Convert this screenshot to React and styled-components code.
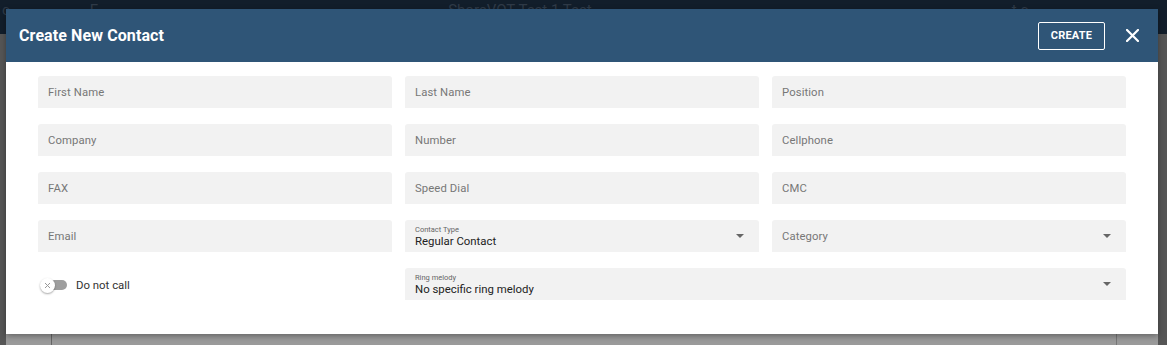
import React from "react";
import styled, { createGlobalStyle } from "styled-components";

const Global = createGlobalStyle`
  html, body { margin: 0; padding: 0; }
  body { font-family: Roboto, "Noto Sans", Arial, sans-serif; background: #575757; }
  * { box-sizing: border-box; }
`;

const Page = styled.div`
  position: relative;
  width: 1167px;
  height: 345px;
  overflow: hidden;
  background: #565656;
`;

const BackTop = styled.div`
  height: 34px;
  background: #121e2b;
  display: flex;
  align-items: flex-start;
  color: #2f3a47;
  font-size: 15px;
  line-height: 18px;
  white-space: nowrap;
  padding-top: 1px;
`;

const Ghost = styled.span`
  margin-left: ${(p) => p.$ml}px;
`;

const BackBottom = styled.div`
  position: absolute;
  left: 6px;
  right: 9px;
  bottom: 0;
  height: 11px;
  background: #9a9a9a;
  &::after {
    content: "";
    position: absolute;
    left: 45px;
    top: 0;
    bottom: 0;
    width: 1px;
    background: #666;
  }
  &::before {
    content: "";
    position: absolute;
    right: 41px;
    top: 0;
    bottom: 0;
    width: 1px;
    background: #777;
  }
`;

const Modal = styled.div`
  position: absolute;
  left: 6px;
  top: 9px;
  width: 1152px;
  height: 325px;
  background: #fff;
  box-shadow: 0 2px 6px rgba(0, 0, 0, 0.35);
  display: flex;
  flex-direction: column;
`;

const Header = styled.div`
  height: 53px;
  background: #2f5577;
  display: flex;
  align-items: center;
  padding: 0 18px 0 13px;
  flex-shrink: 0;
`;

const Title = styled.h1`
  margin: 0;
  font-size: 16px;
  font-weight: 700;
  color: #fff;
  flex: 1;
  letter-spacing: 0.1px;
`;

const CreateButton = styled.button`
  width: 67px;
  height: 28px;
  border: 1px solid #fff;
  border-radius: 2px;
  background: transparent;
  color: #fff;
  font-family: Roboto, sans-serif;
  font-weight: 700;
  font-size: 11px;
  letter-spacing: 0.2px;
  margin-right: 19px;
  padding: 0;
  cursor: pointer;
`;

const CloseButton = styled.button`
  width: 16px;
  height: 16px;
  border: 0;
  padding: 0;
  background: transparent;
  display: flex;
  align-items: center;
  justify-content: center;
  cursor: pointer;
`;

const Body = styled.div`
  padding: 14px 32px 0 32px;
  display: grid;
  grid-template-columns: repeat(3, 354px);
  column-gap: 13px;
  row-gap: 16px;
  grid-auto-rows: 32px;
`;

const Field = styled.div`
  background: #f2f2f2;
  border-radius: 3px 3px 0 0;
  display: flex;
  align-items: center;
  padding: 0 10px;
  position: relative;
  grid-column: ${(p) => (p.$span ? `span ${p.$span}` : "auto")};
`;

const Placeholder = styled.span`
  font-size: 11.3px;
  color: #777;
  letter-spacing: 0.1px;
`;

const SelectBody = styled.div`
  display: flex;
  flex-direction: column;
  flex: 1;
  padding-top: 1px;
`;

const SmallLabel = styled.span`
  font-size: 7.5px;
  color: #666;
  line-height: 9px;
`;

const Value = styled.span`
  font-size: 11.4px;
  color: #222;
  line-height: 14px;
`;

const Arrow = styled.span`
  position: absolute;
  right: 15px;
  top: 14px;
  width: 0;
  height: 0;
  border-left: 4px solid transparent;
  border-right: 4px solid transparent;
  border-top: 4px solid #666;
`;

const ToggleRow = styled.div`
  display: flex;
  align-items: center;
  padding-left: 2px;
  padding-top: 1px;
  gap: 9px;
`;

const Switch = styled.div`
  position: relative;
  width: 27px;
  height: 14px;
`;

const Track = styled.div`
  position: absolute;
  left: 6px;
  right: 0;
  top: 2px;
  height: 10px;
  border-radius: 5px;
  background: #9e9e9e;
`;

const Thumb = styled.div`
  position: absolute;
  left: 0;
  top: 0;
  width: 15px;
  height: 15px;
  border-radius: 50%;
  background: #fff;
  box-shadow: 0 1px 2px rgba(0, 0, 0, 0.35);
  display: flex;
  align-items: center;
  justify-content: center;
`;

const ToggleLabel = styled.span`
  font-size: 11.4px;
  color: #333;
`;

const TextField = ({ label }) => (
  <Field>
    <Placeholder>{label}</Placeholder>
  </Field>
);

const SelectField = ({ label, value, span }) => (
  <Field $span={span}>
    {value ? (
      <SelectBody>
        <SmallLabel>{label}</SmallLabel>
        <Value>{value}</Value>
      </SelectBody>
    ) : (
      <Placeholder>{label}</Placeholder>
    )}
    <Arrow />
  </Field>
);

export default function App() {
  return (
    <>
      <Global />
      <Page>
        <BackTop>
          <Ghost $ml={2}>c</Ghost>
          <Ghost $ml={80}>F</Ghost>
          <Ghost $ml={350}>ShoreVOT Test 1 Test</Ghost>
          <Ghost $ml={420}>t.c</Ghost>
        </BackTop>
        <BackBottom />
        <Modal>
          <Header>
            <Title>Create New Contact</Title>
            <CreateButton>CREATE</CreateButton>
            <CloseButton aria-label="close">
              <svg width="13" height="13" viewBox="0 0 13 13">
                <path d="M1 1 L12 12 M12 1 L1 12" stroke="#fff" strokeWidth="2.2" strokeLinecap="square" />
              </svg>
            </CloseButton>
          </Header>
          <Body>
            <TextField label="First Name" />
            <TextField label="Last Name" />
            <TextField label="Position" />
            <TextField label="Company" />
            <TextField label="Number" />
            <TextField label="Cellphone" />
            <TextField label="FAX" />
            <TextField label="Speed Dial" />
            <TextField label="CMC" />
            <TextField label="Email" />
            <SelectField label="Contact Type" value="Regular Contact" />
            <SelectField label="Category" />
            <ToggleRow>
              <Switch>
                <Track />
                <Thumb>
                  <svg width="7" height="7" viewBox="0 0 7 7">
                    <path d="M1 1 L6 6 M6 1 L1 6" stroke="#999" strokeWidth="1" />
                  </svg>
                </Thumb>
              </Switch>
              <ToggleLabel>Do not call</ToggleLabel>
            </ToggleRow>
            <SelectField label="Ring melody" value="No specific ring melody" span={2} />
          </Body>
        </Modal>
      </Page>
    </>
  );
}
